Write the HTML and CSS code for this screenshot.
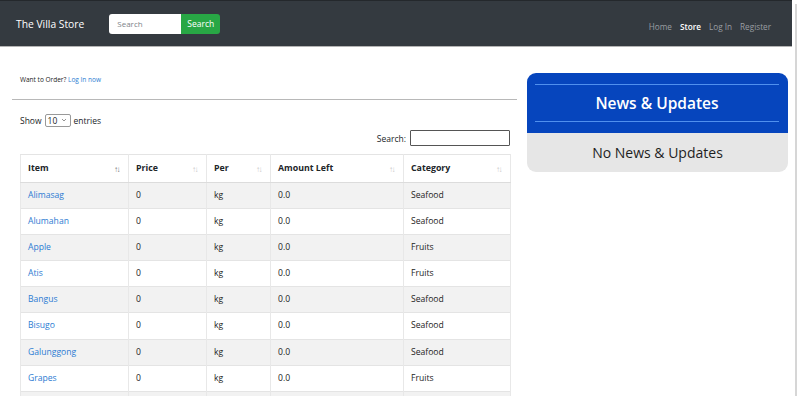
FILE: index.html
```html
<!DOCTYPE html>
<html lang="en">
  <head>
    <meta charset="UTF-8" />
    <meta name="viewport" content="width=device-width, initial-scale=1.0" />
    <title>The Villa Store</title>
    <link rel="stylesheet" href="styles.css">
  </head>
  <body>
    <div class="screen">
      <div class="page">
        <nav class="navbar">
          <a class="brand" href="#">The Villa Store</a>
          <form class="navSearch">
            <input type="text" placeholder="Search" />
            <button type="button">Search</button>
          </form>
          <ul class="navLinks">
            <li><a href="#">Home</a></li>
            <li><a class="active" href="#">Store</a></li>
            <li><a href="#">Log In</a></li>
            <li><a href="#">Register</a></li>
          </ul>
        </nav>

        <div class="mainWrapp">
          <div class="leftCol">
            <p class="orderNote">Want to Order? <a href="#">Log In now</a></p>
            <hr class="divider" />

            <div class="lengthRow">
              Show
              <div class="lengthSelect">
                <span>10</span>
                <svg width="6" height="4" viewBox="0 0 6 4"><path d="M1 1 L3 3 L5 1" fill="none" stroke="#888" stroke-width="0.9"/></svg>
              </div>
              entries
            </div>
            <div class="filterRow">
              <label>Search:</label>
              <input type="text" class="filterInput" />
            </div>

            <table class="storeTable">
              <thead>
                <tr>
                  <th class="colItem"><div class="thInner"><span>Item</span><span class="sort sorted">&#8593;&#8595;</span></div></th>
                  <th class="colPrice"><div class="thInner"><span>Price</span><span class="sort">&#8593;&#8595;</span></div></th>
                  <th class="colPer"><div class="thInner"><span>Per</span><span class="sort">&#8593;&#8595;</span></div></th>
                  <th class="colAmount"><div class="thInner"><span>Amount Left</span><span class="sort">&#8593;&#8595;</span></div></th>
                  <th class="colCat"><div class="thInner"><span>Category</span><span class="sort">&#8593;&#8595;</span></div></th>
                </tr>
              </thead>
              <tbody>
                <tr><td><a href="#">Alimasag</a></td><td>0</td><td>kg</td><td>0.0</td><td>Seafood</td></tr>
                <tr><td><a href="#">Alumahan</a></td><td>0</td><td>kg</td><td>0.0</td><td>Seafood</td></tr>
                <tr><td><a href="#">Apple</a></td><td>0</td><td>kg</td><td>0.0</td><td>Fruits</td></tr>
                <tr><td><a href="#">Atis</a></td><td>0</td><td>kg</td><td>0.0</td><td>Fruits</td></tr>
                <tr><td><a href="#">Bangus</a></td><td>0</td><td>kg</td><td>0.0</td><td>Seafood</td></tr>
                <tr><td><a href="#">Bisugo</a></td><td>0</td><td>kg</td><td>0.0</td><td>Seafood</td></tr>
                <tr><td><a href="#">Galunggong</a></td><td>0</td><td>kg</td><td>0.0</td><td>Seafood</td></tr>
                <tr><td><a href="#">Grapes</a></td><td>0</td><td>kg</td><td>0.0</td><td>Fruits</td></tr>
                <tr class="partRow"><td></td><td></td><td></td><td></td><td></td></tr>
              </tbody>
            </table>
          </div>

          <div class="rightCol">
            <div class="newsCard">
              <div class="newsHead">
                <h2>News &amp; Updates</h2>
              </div>
              <div class="newsBody">No News &amp; Updates</div>
            </div>
          </div>
        </div>
      </div>
      <div class="scrollRail"></div>
    </div>
  </body>
</html>
```

FILE: styles.css
```css
body {
  margin: 0;
  font-family: "Open Sans", "Noto Sans", sans-serif;
  color: #212529;
  background-color: white;
}

a {
  color: #2b7bd2;
  text-decoration: none;
}

.screen {
  display: flex;
  height: 396px;
  overflow: hidden;
}

.page {
  width: 792px;
}

.scrollRail {
  width: 7px;
  border-left: 3px solid white;
  border-right: 2px solid white;
  box-sizing: border-box;
  background-color: #d6d6d6;
  margin-top: 4px;
}

.navbar {
  display: flex;
  align-items: center;
  height: 45px;
  padding: 0 21px 0 16px;
  background-color: #343a40;
  border-top: 1px solid #24282c;
  border-bottom: 1px solid #b4b4b4;
}

.brand {
  color: white;
  font-size: 10.3px;
  margin-right: 25px;
}

.navSearch {
  display: flex;
  margin: 0;
}

.navSearch input {
  width: 72px;
  height: 20px;
  box-sizing: border-box;
  border: none;
  border-radius: 3px 0 0 3px;
  padding: 0 8px;
  font-family: inherit;
  font-size: 8px;
  outline: none;
}

.navSearch input::placeholder {
  color: #7d8389;
}

.navSearch button {
  width: 39px;
  height: 20px;
  border: none;
  border-radius: 0 3px 3px 0;
  background-color: #28a745;
  color: white;
  font-family: inherit;
  font-size: 8.5px;
  padding: 0;
}

.navLinks {
  display: flex;
  list-style: none;
  margin: 0 0 0 auto;
  padding: 0;
  gap: 8px;
}

.navLinks a {
  color: #9a9ea2;
  font-size: 8.2px;
}

.navLinks a.active {
  color: white;
  font-weight: 600;
}

.mainWrapp {
  display: flex;
  gap: 10px;
  padding: 26px 0 0 12px;
}

.leftCol {
  width: 505px;
}

.rightCol {
  width: 261px;
}

.orderNote {
  margin: 0;
  padding: 0 8px;
  font-size: 6.5px;
  line-height: 14px;
  color: #222;
}

.divider {
  margin: 12px 0 0 0;
  border: none;
  border-top: 1px solid #b8b8b8;
}

.lengthRow {
  display: flex;
  align-items: center;
  gap: 3px;
  margin: 13px 0 0 8px;
  height: 14px;
  font-size: 8.5px;
}

.lengthSelect {
  display: flex;
  align-items: center;
  justify-content: space-between;
  width: 26px;
  height: 13px;
  box-sizing: border-box;
  padding: 0 3px 0 2px;
  border: 1px solid #999;
  border-radius: 2px;
  font-size: 8.5px;
}

.filterRow {
  display: flex;
  justify-content: flex-end;
  align-items: center;
  gap: 4px;
  margin: 3px 7px 0 0;
  font-size: 8.5px;
}

.filterInput {
  width: 100px;
  height: 16px;
  box-sizing: border-box;
  border: 1px solid #555;
  border-radius: 1px;
  margin: 0;
}

.storeTable {
  width: 490px;
  margin: 8px 0 0 8px;
  border-collapse: collapse;
  font-size: 8.6px;
  table-layout: fixed;
}

.storeTable th,
.storeTable td {
  box-sizing: border-box;
  padding: 7px 7px;
  line-height: 11.15px;
  text-align: left;
  border-top: 1px solid #e4e4e4;
  border-left: 1px solid #e8e8e8;
  border-right: 1px solid #e8e8e8;
  white-space: nowrap;
}

.storeTable th {
  padding: 8px 7px 7.5px 7px;
  font-weight: 700;
  font-size: 8.8px;
  border-bottom: 1px solid #dcdcdc;
}

.storeTable td {
  color: #222;
}

.thInner {
  display: flex;
  justify-content: space-between;
  align-items: center;
}

.sort {
  font-size: 8px;
  font-weight: 400;
  color: #c8c8c8;
  letter-spacing: -1.5px;
  padding-right: 2px;
}

.sort.sorted {
  color: #777;
}

.colItem { width: 108px; }
.colPrice { width: 78px; }
.colPer { width: 64px; }
.colAmount { width: 133px; }
.colCat { width: 107px; }

.storeTable tbody tr:nth-child(odd) {
  background-color: #f2f2f2;
}

.storeTable .partRow td {
  height: 26px;
}

.newsCard {
  border-radius: 9px;
  overflow: hidden;
  text-align: center;
}

.newsHead {
  background-color: #0645bd;
  padding: 11px 9px 11px 8px;
}

.newsHead h2 {
  margin: 0;
  height: 36px;
  line-height: 36px;
  border-top: 1px solid #5090ee;
  border-bottom: 1px solid #5090ee;
  color: white;
  font-size: 15.5px;
  font-weight: 600;
}

.newsBody {
  background-color: #e6e6e6;
  height: 39px;
  line-height: 39px;
  font-size: 14px;
  color: #1e1e1e;
}
```
